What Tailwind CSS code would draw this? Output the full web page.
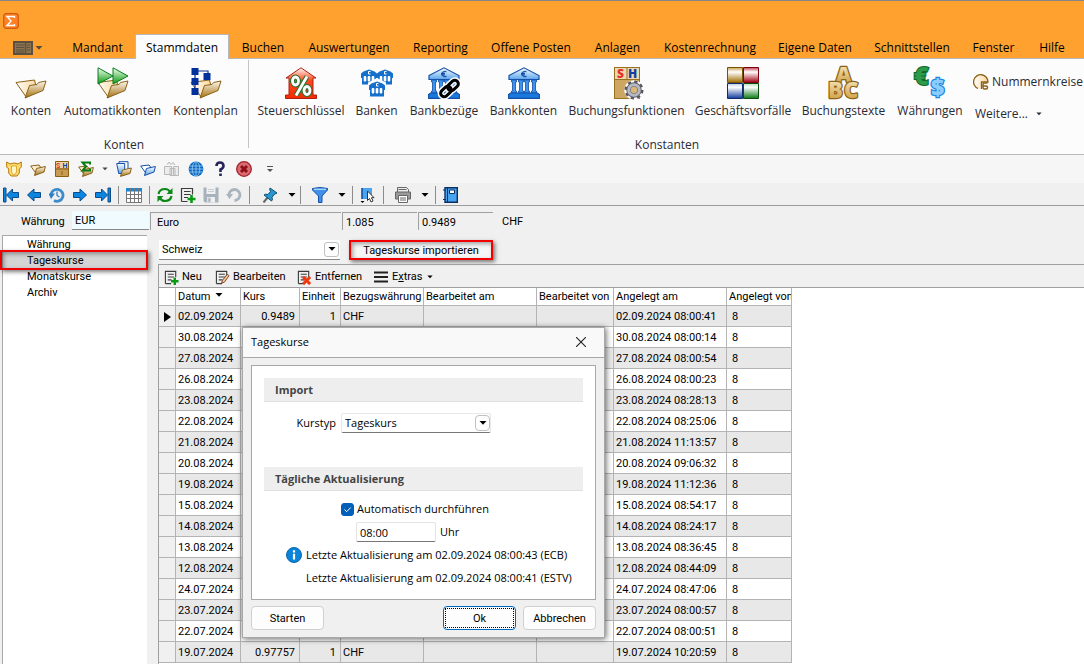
<!DOCTYPE html>
<html lang="de">
<head>
  <meta charset="UTF-8">
  <meta name="viewport" content="width=device-width, initial-scale=1.0">
  <title>Währungen</title>
  <script src="https://cdn.jsdelivr.net/npm/@tailwindcss/browser@4"></script>
</head>
<body class="bg-[#f0f0f0] text-black font-['Roboto','Liberation_Sans',sans-serif] text-[11px] leading-4 h-screen overflow-hidden flex flex-col">

  <!-- shared gradients and symbols -->
  <svg class="absolute w-0 h-0" aria-hidden="true">
    <defs>
      <linearGradient id="gold" x1="0" y1="0" x2="0" y2="1"><stop offset="0" stop-color="#fffaf0"/><stop offset="1" stop-color="#a4700f"/></linearGradient>
      <linearGradient id="cream" x1="0" y1="0" x2="1" y2="0"><stop offset="0" stop-color="#fffdf8"/><stop offset="1" stop-color="#fbd9a0"/></linearGradient>
      <linearGradient id="green" x1="0" y1="0" x2="0" y2="1"><stop offset="0" stop-color="#f4fff4"/><stop offset="1" stop-color="#0a9a0a"/></linearGradient>
      <linearGradient id="red" x1="0" y1="0" x2="0" y2="1"><stop offset="0" stop-color="#fff"/><stop offset=".4" stop-color="#ff4a20"/><stop offset="1" stop-color="#f52a00"/></linearGradient>
      <linearGradient id="blue" x1="0" y1="0" x2="0" y2="1"><stop offset="0" stop-color="#fff"/><stop offset="1" stop-color="#5aa4ec"/></linearGradient>
      <linearGradient id="letters" x1="0" y1="0" x2="0" y2="1"><stop offset="0" stop-color="#fff4d8"/><stop offset="1" stop-color="#c8942c"/></linearGradient>
      <linearGradient id="q1" x1="0" y1="0" x2="0" y2="1"><stop offset="0" stop-color="#c8a050"/><stop offset=".3" stop-color="#fff"/><stop offset="1" stop-color="#a06c00"/></linearGradient>
      <linearGradient id="q2" x1="0" y1="0" x2="0" y2="1"><stop offset="0" stop-color="#c04050"/><stop offset=".3" stop-color="#fff"/><stop offset="1" stop-color="#a00010"/></linearGradient>
      <linearGradient id="q3" x1="0" y1="0" x2="0" y2="1"><stop offset="0" stop-color="#b8c8e8"/><stop offset=".25" stop-color="#fff"/><stop offset="1" stop-color="#103c9c"/></linearGradient>
      <linearGradient id="q4" x1="0" y1="0" x2="0" y2="1"><stop offset="0" stop-color="#b0dcb4"/><stop offset=".25" stop-color="#fff"/><stop offset="1" stop-color="#0a7a14"/></linearGradient>
      <symbol id="folder" viewBox="0 0 32 32">
        <path d="M1 15.500 19.500 13l1 4-9 13.500Z" fill="url(#cream)" stroke="#8a6218"/>
        <path d="M14.500 18.500 22 17.500l1.500-2 7.500-1.500-3 9.500L10 31Z" fill="url(#gold)" stroke="#8a6218"/>
      </symbol>
      <symbol id="folder-small" viewBox="0 0 16 16">
        <path d="M.7 5 9 4l1.500 2-4 7Z" fill="url(#cream)" stroke="#8a6218"/>
        <path d="M6.500 7.500 15.400 5.500 14 11 4.500 14.500Z" fill="url(#gold)" stroke="#8a6218"/>
      </symbol>
      <symbol id="bank" viewBox="0 0 32 32">
        <path d="M1 8.500 16 .8 31 8.500v4H1Z" fill="url(#blue)" stroke="#1550a8" stroke-width="1.200"/>
        <path d="M3.500 13h5v2h-1v9h1v2h-5v-2h1v-9h-1zM10.500 13h5v2h-1v9h1v2h-5v-2h1v-9h-1zM16.500 13h5v2h-1v9h1v2h-5v-2h1v-9h-1zM23.500 13h5v2h-1v9h1v2h-5v-2h1v-9h-1z" fill="#3c94ee" stroke="#1550a8" stroke-width=".8"/>
        <path d="M.6 31.400V27.500l2-1.500h26.800l2 1.500v3.900Z" fill="#1878dc" stroke="#1550a8" stroke-width="1.200"/>
        <path d="M18.500 5a2.600 2.600 0 1 0 0 4M13 6.400h4M13 7.900h4" fill="none" stroke="#1550a8" stroke-width="1.100"/>
      </symbol>
      <symbol id="house" viewBox="0 0 16 16">
        <path d="M0 4.500 2.500 2.500 8 .5l5.500 2L16 4.500V9h-1v6.500H1V9H0Z" fill="#1470cc"/>
        <rect x="2.700" y="7" width="2.600" height="5.500" rx="1" fill="#fff"/><rect x="6.700" y="7" width="2.600" height="5.500" rx="1" fill="#fff"/><rect x="10.700" y="7" width="2.600" height="5.500" rx="1" fill="#fff"/>
        <path d="M9.500 2.500h-2v2.500h2" fill="none" stroke="#fff"/>
      </symbol>
      <symbol id="arrow" viewBox="0 0 16 16"><path d="M1.500 8 8 2v3.500h6.500v5H8V14Z" fill="#0a86e0" stroke="#0d4a8a"/></symbol>
      <symbol id="doc" viewBox="0 0 16 16"><path d="M1.500 14.500v-13h11v6M1.500 14.500h6M4 4.500h6.500M4 7.500h6.500M4 10.500h4" fill="none" stroke="#3c3c3c" stroke-width="1.200"/></symbol>
      <symbol id="down" viewBox="0 0 8 8"><path d="M.5 2h7L4 5.800Z" fill="currentColor"/></symbol>
    </defs>
  </svg>

  <!-- title bar and menu tabs -->
  <header class="bg-[#ffa12e] border-t border-[#858585] border-b border-b-[#b8b8b8] h-[59px] shrink-0 flex flex-col justify-between">
    <svg class="w-4 h-4 ml-[3px] mt-3" viewBox="0 0 16 16"><rect x=".7" y=".7" width="14.600" height="14.600" rx="2.500" fill="#ff8125" stroke="#d25a10" stroke-width="1.200"/><path d="M11.500 5V3.500H4L8 8l-4 4.500h7.500V11" fill="none" stroke="#fff" stroke-width="1.400"/></svg>
    <nav class="flex h-[25px] -mb-px font-['Open_Sans',sans-serif] text-[12px] [&>button]:pt-0.5">
      <button class="w-[60px] shrink-0 flex items-center pl-[13px] gap-[2px] text-[#5a4a38]" aria-label="Ansicht">
        <svg class="w-5 h-[14px]" viewBox="0 0 20 14"><rect x="1" y="1" width="18" height="12" fill="#8b734f" stroke="#5c5042" stroke-width="2"/><path d="M3 4h8M3 6.500h8M3 9h8M14 4h3M14 6.500h3M14 9h3M3 11h8" stroke="#5c5042"/><path d="M12.500 1v12" stroke="#5c5042" stroke-width="1.500"/></svg>
        <svg class="w-2 h-2"><use href="#down"/></svg>
      </button>
      <button class="w-[75px] shrink-0">Mandant</button>
      <button class="w-[94px] shrink-0 bg-[#fcfcfc] border border-b-0 border-[#b8b8b8]">Stammdaten</button>
      <button class="w-[68px] shrink-0">Buchen</button>
      <button class="w-[104px] shrink-0">Auswertungen</button>
      <button class="w-[79px] shrink-0">Reporting</button>
      <button class="w-[102px] shrink-0">Offene Posten</button>
      <button class="w-[71px] shrink-0">Anlagen</button>
      <button class="w-[114px] shrink-0">Kostenrechnung</button>
      <button class="w-[96px] shrink-0">Eigene Daten</button>
      <button class="w-[98px] shrink-0">Schnittstellen</button>
      <button class="w-[65px] shrink-0">Fenster</button>
      <button class="w-[52px] shrink-0">Hilfe</button>
    </nav>
  </header>

  <!-- ribbon -->
  <section class="bg-[#fcfcfc] h-24 shrink-0 border-b border-[#b8b8b8] flex font-['Open_Sans',sans-serif] text-[12px] text-[#2a2a33] whitespace-nowrap">
    <div class="flex flex-col px-1 w-[248px] shrink-0">
      <div class="flex pt-2 h-[68px]">
        <button class="w-[54px] flex flex-col items-center gap-1"><svg class="w-8 h-8"><use href="#folder"/></svg>Konten</button>
        <button class="w-[109px] flex flex-col items-center gap-1">
          <svg class="w-8 h-8" viewBox="0 0 32 32"><use href="#folder"/><path d="M1 .8 16 9 1 17ZM16 .8 31 9 16 17Z" fill="url(#green)" stroke="#0a7a20"/></svg>Automatikkonten</button>
        <button class="w-[77px] flex flex-col items-center gap-1">
          <svg class="w-8 h-8" viewBox="0 0 32 32"><use href="#folder"/><path d="M5 4h13v5M5 4v20" fill="none" stroke="#0a2f8f" stroke-width="1.200"/><path d="M1.500 1h7v7h-7zM1.500 11h7v7h-7zM1.500 21h7v7h-7zM13.500 6h7v7h-7z" fill="#00309c"/></svg>Kontenplan</button>
      </div>
      <div class="text-center mt-2.5">Konten</div>
    </div>
    <div class="w-px bg-[#c4c4c4] mt-px h-[88px] shrink-0"></div>
    <div class="flex flex-col pl-1 flex-1">
      <div class="flex pt-2 h-[68px]">
        <button class="w-[96px] shrink-0 flex flex-col items-center gap-1">
          <svg class="w-8 h-8" viewBox="0 0 32 32"><path d="M1 11 16 .8 31 11h-3v17h3.500v3.500H.5V28H4V11Z" fill="url(#red)" stroke="#b02010"/><g fill="none" stroke="#2a7030" stroke-width="5"><ellipse cx="10.500" cy="14" rx="3" ry="4"/><ellipse cx="22" cy="23.500" rx="3" ry="4"/><path d="M22 9.500 11 28.500"/></g><g fill="none" stroke="#fff" stroke-width="2.800"><ellipse cx="10.500" cy="14" rx="3" ry="4"/><ellipse cx="22" cy="23.500" rx="3" ry="4"/><path d="M22 9.500 11 28.500"/></g></svg>Steuerschlüssel</button>
        <button class="w-[55px] shrink-0 flex flex-col items-center gap-1">
          <svg class="w-8 h-8" viewBox="0 0 32 32"><use href="#house" x="0" y="2" width="16" height="16"/><use href="#house" x="16" y="2" width="16" height="16"/><path d="M7 18v-2.500L16 11l9 4.500V18Z" fill="#fcfcfc"/><use href="#house" x="8" y="14" width="16" height="16"/></svg>Banken</button>
        <button class="w-[80px] shrink-0 flex flex-col items-center gap-1">
          <svg class="w-8 h-8" viewBox="0 0 32 32"><use href="#bank"/><g fill="none" stroke="#fff" stroke-width="6"><rect x="12" y="21" width="12" height="7" rx="3.500" transform="rotate(-42 18 24.500)"/><rect x="19" y="15" width="12" height="7" rx="3.500" transform="rotate(-42 25 18.500)"/></g><g fill="none" stroke="#000" stroke-width="3"><rect x="12" y="21" width="12" height="7" rx="3.500" transform="rotate(-42 18 24.500)"/><rect x="19" y="15" width="12" height="7" rx="3.500" transform="rotate(-42 25 18.500)"/></g></svg>Bankbezüge</button>
        <button class="w-[79px] shrink-0 flex flex-col items-center gap-1"><svg class="w-8 h-8"><use href="#bank"/></svg>Bankkonten</button>
        <button class="w-[127px] shrink-0 flex flex-col items-center gap-1">
          <svg class="w-8 h-8 overflow-visible" viewBox="0 0 32 32"><rect x="3.500" y=".5" width="25" height="31" fill="#cda762" stroke="#9a7020"/><path d="M4 1h24v11H4z" fill="#ecd9b4"/><path d="M16 1v11M4 12.500h24" stroke="#9a7020"/><text x="6" y="10.500" font-family="Open Sans" font-weight="800" font-size="12" fill="#e83020">S</text><text x="17" y="10.500" font-family="Open Sans" font-weight="800" font-size="12" fill="#1040a0">H</text><circle cx="23" cy="23" r="7.800" fill="none" stroke="#fff" stroke-width="4"/><circle cx="23" cy="23" r="8" fill="none" stroke="#55555f" stroke-width="3" stroke-dasharray="3.140"/><circle cx="23" cy="23" r="5.500" fill="#d8b878" stroke="#62626c" stroke-width="4.500"/><circle cx="23" cy="23" r="5.300" fill="none" stroke="#b8b8c4" stroke-width="3"/></svg>Buchungsfunktionen</button>
        <button class="w-[106px] shrink-0 flex flex-col items-center gap-1">
          <svg class="w-8 h-8" viewBox="0 0 32 32"><path d="M.5.5h15v15H.5z" fill="url(#q1)" stroke="#7a5400"/><path d="M16.500.5h15v15h-15z" fill="url(#q2)" stroke="#7c0010"/><path d="M.5 16.500h15v15H.5z" fill="url(#q3)" stroke="#102c70"/><path d="M16.500 16.500h15v15h-15z" fill="url(#q4)" stroke="#0a5010"/></svg>Geschäftsvorfälle</button>
        <button class="w-[95px] shrink-0 flex flex-col items-center gap-1">
          <svg class="w-8 h-8 overflow-visible" viewBox="0 0 32 32" font-family="Open Sans" font-weight="800" fill="url(#letters)" stroke="#8a6218" stroke-width="2.500" stroke-linejoin="round" paint-order="stroke"><text x="8" y="15" font-size="21">A</text><text x="0" y="31" font-size="22">B</text><text x="16" y="31" font-size="22">C</text></svg>Buchungstexte</button>
        <button class="w-[78px] shrink-0 flex flex-col items-center gap-1">
          <svg class="w-8 h-8 overflow-visible" viewBox="0 0 32 32" font-family="Open Sans" font-weight="800"><text x="0" y="17.500" font-size="25" fill="#2c9a48" stroke="#0c6828" stroke-width="2" paint-order="stroke">€</text><text x="17" y="29" font-size="23" fill="#8cccff" stroke="#2088e0" stroke-width="2.500" paint-order="stroke">$</text></svg>Währungen</button>
        <div class="flex flex-col pt-[7px] pl-1 gap-4">
          <button class="flex items-center gap-[3px]">
            <svg class="w-4 h-4" viewBox="0 0 16 16"><path d="M5 14.500A7.200 7.200 0 1 1 15 8H8.500v7" fill="url(#cream)" stroke="#8a6218" stroke-width="1.300"/><path d="M14.500 9h-3a1.500 1.500 0 0 0-1.500 1.500v3q0 1.500 1.500 1.500h1.500q1.500 0 1.500-1.500t-1.500-1.500H10" fill="none" stroke="#8a6218" stroke-width="1.500"/></svg>Nummernkreise</button>
          <button class="flex items-center gap-2 pl-0.5">Weitere... <svg class="w-1.5 h-2" viewBox="0 0 8 8"><use href="#down"/></svg></button>
        </div>
      </div>
      <div class="w-[828px] text-center mt-2.5">Konstanten</div>
    </div>
  </section>

  <!-- quick access bar -->
  <section class="bg-[#f6f6f6] h-7 shrink-0 flex items-center gap-2 pl-1.5">
    <button aria-label="Wappen"><svg class="w-4 h-4" viewBox="0 0 16 16"><path d="M.7 1 4 3l4-1 4 1 3.300-2v5l-2 2v4L11 15H5l-2.300-3V8l-2-2Z" fill="#ffdc70" stroke="#b87800"/><path d="M5.500 5h5v6L9 13.500H7L5.500 11Z" fill="#fff4c8" stroke="#d09010" stroke-width=".7"/></svg></button>
    <button aria-label="Konten"><svg class="w-4 h-4"><use href="#folder-small"/></svg></button>
    <button aria-label="Buchen"><svg class="w-4 h-4 overflow-visible" viewBox="0 0 16 16"><path d="M1.500.5h13v15h-13z" fill="#c89c50" stroke="#8a6010"/><path d="M2 1h12v6H2z" fill="#f0d8a8"/><path d="M1.500 8h13M8 10v4" stroke="#8a6010"/><text x="2" y="6.800" font-size="7" font-weight="700" fill="#e03020">S</text><text x="8.500" y="6.800" font-size="7" font-weight="700" fill="#1040a0">H</text></svg></button>
    <button aria-label="Summen"><svg class="w-4 h-4" viewBox="0 0 16 16"><use href="#folder-small" y="1" width="16" height="16"/><path d="M12 3.500V1.500H4.500L8 5.500 4.500 9.500H12v-2" fill="none" stroke="#0a7a14" stroke-width="2"/></svg></button>
    <svg class="w-1.5 h-2 text-[#444]" viewBox="0 0 8 8"><use href="#down"/></svg>
    <button aria-label="Mappe"><svg class="w-4 h-4" viewBox="0 0 16 16"><path d="M3 .7h9v11H3z" fill="#fff" stroke="#1550a8"/><path d="M.7 2.500h8v10h-6Z" fill="url(#blue)" stroke="#1550a8"/><path d="M6.500 9 15.400 7 14 12.500 4.500 15.400Z" fill="url(#gold)" stroke="#8a6218"/></svg></button>
    <button aria-label="Ordner"><svg class="w-4 h-4" viewBox="0 0 16 16"><path d="M.7 5 9 4l1.500 2-4 7Z" fill="#fff" stroke="#1550a8"/><path d="M6.500 7.500 15.400 5.500 14 11 4.500 14.500Z" fill="url(#blue)" stroke="#1550a8"/></svg></button>
    <button aria-label="Kopieren"><svg class="w-4 h-4" viewBox="0 0 16 16" fill="#ececec" stroke="#b8b8b8"><path d="M3 3.500 5 1l2 2.500 2-2L11 4M.5 5.500h7v8h-7zM6 7.500h5v7H6zM9.500 5.500h5v9h-5z"/></svg></button>
    <button aria-label="Web"><svg class="w-4 h-4" viewBox="0 0 16 16"><circle cx="8" cy="8" r="7.400" fill="#0b67bd"/><path d="M1 5h14M.6 8h14.800M1 11h14M8 .6v14.800" stroke="#9cd0f8" stroke-width=".8"/><ellipse cx="8" cy="8" rx="3.800" ry="7.300" fill="none" stroke="#9cd0f8" stroke-width=".8"/></svg></button>
    <button aria-label="Hilfe"><svg class="w-4 h-4" viewBox="0 0 16 16"><path d="M4.500 5Q4.500 1.500 8 1.500T11.500 5Q11.500 7 8.500 8.500V11M8.500 12.500v2.500" fill="none" stroke="#25255c" stroke-width="2.600"/></svg></button>
    <button aria-label="Schließen"><svg class="w-4 h-4" viewBox="0 0 16 16"><circle cx="8" cy="8" r="7.300" fill="#dc6a70" stroke="#a02028" stroke-width="1.300"/><path d="m5 5 6 6m0-6-6 6" stroke="#8c1018" stroke-width="3"/></svg></button>
    <svg class="w-2 h-2 ml-1.5 text-[#555]" viewBox="0 0 8 8"><path d="M1 1.500h6" stroke="#555"/><path d="M1 4h6L4 7Z" fill="#555"/></svg>
  </section>

  <!-- record toolbar -->
  <section class="h-[23px] pt-px shrink-0 border-b border-[#9c9c9c] flex items-center gap-[7px] pl-[3px]">
    <button aria-label="Erster"><svg class="w-4 h-4" viewBox="0 0 16 16"><path d="M.500 1h2.500v14H.5zM3.500 8 9.500 2v3.500h6v5h-6V14Z" fill="#0a86e0" stroke="#0d4a8a"/></svg></button>
    <button aria-label="Zurück"><svg class="w-4 h-4"><use href="#arrow"/></svg></button>
    <button aria-label="Verlauf"><svg class="w-4 h-4" viewBox="0 0 16 16"><path d="M2 8.500a6 6 0 1 1 3 5" fill="none" stroke="#3a8ccc" stroke-width="2.800"/><path d="M-.5 6.500h6.500L2 12Z" fill="#2d7fc4"/><path d="M8 4.500v4l2.500 1.500" fill="none" stroke="#2d7fc4" stroke-width="1.300"/></svg></button>
    <button aria-label="Weiter"><svg class="w-4 h-4 rotate-180"><use href="#arrow"/></svg></button>
    <button aria-label="Letzter"><svg class="w-4 h-4 rotate-180" viewBox="0 0 16 16"><path d="M.500 1h2.500v14H.5zM3.500 8 9.500 2v3.500h6v5h-6V14Z" fill="#0a86e0" stroke="#0d4a8a"/></svg></button>
    <span class="w-px h-[18px] bg-[#8c8c8c]"></span>
    <button aria-label="Tabelle"><svg class="w-4 h-4" viewBox="0 0 16 16"><path d="M.5 1.500h15v14H.5z" fill="#fff" stroke="#777"/><path d="M0 1h16v3.500H0z" fill="#1688d4"/><path d="M.5 7.500h15M.5 11.500h15M4.500 1v14M8.500 1v14M12.500 1v14" stroke="#777"/></svg></button>
    <span class="w-px h-[18px] bg-[#8c8c8c]"></span>
    <button aria-label="Aktualisieren"><svg class="w-4 h-4" viewBox="0 0 16 16" fill="none" stroke="#0a8a14" stroke-width="2.200"><path d="M1.500 7Q2.500 2 8 2q3.500 0 5 3M14.500 9Q13.500 14 8 14q-3.500 0-5-3"/><path d="M15.500 1v6h-6ZM.5 15V9h6Z" fill="#0a8a14" stroke="none"/></svg></button>
    <button aria-label="Neu"><svg class="w-4 h-4" viewBox="0 0 16 16"><use href="#doc"/><path d="M11.500 8v8M7.500 12h8" stroke="#0a9a14" stroke-width="2.600"/></svg></button>
    <button aria-label="Speichern"><svg class="w-4 h-4" viewBox="0 0 16 16"><path d="M.5.5h15v15H2l-1.500-1.500z" fill="#a8b2bc"/><path d="M3.500 0h9v7h-9zM4 10h8v5.500H4z" fill="#eef0f2"/><path d="M5 11h2.500v4H5zM5 2.500h6M5 4.500h6" fill="#a8b2bc" stroke="#c8ced4"/></svg></button>
    <button aria-label="Rückgängig"><svg class="w-4 h-4" viewBox="0 0 16 16"><path d="M3 8.500A5.500 5.500 0 1 1 8.500 13.500" fill="none" stroke="#aab4be" stroke-width="2.800"/><path d="M0 7h7l-3.500 5Z" fill="#aab4be"/></svg></button>
    <span class="w-px h-[18px] bg-[#8c8c8c]"></span>
    <button class="flex items-center gap-[7px] pl-[3px]" aria-label="Anheften"><svg class="w-5 h-4" viewBox="0 0 20 16"><path d="M8 10 3.500 15.500" stroke="#666" stroke-width="2"/><path d="m10 1 7 5-2 1-1 .5-2 3 .5 2-1 1.500L4 8l1.500-.8 2.500.3 2.500-3-.8-1.800Z" fill="#2a96d0" stroke="#0c5070"/></svg><svg class="w-[10px] h-2" viewBox="0 0 8 8"><use href="#down"/></svg></button>
    <span class="w-px h-[18px] bg-[#8c8c8c] -ml-1"></span>
    <button class="flex items-center gap-[9px] pl-1" aria-label="Filter"><svg class="w-4 h-4" viewBox="0 0 16 16"><path d="M.5 1.500Q8-.5 15.500 1.500v1.500L10 9v6.500H6.500V9L.5 3Z" fill="#4090e8" stroke="#1550a8"/><path d="M2 2.300h12" stroke="#b4dcff" stroke-width="1.200"/></svg><svg class="w-[10px] h-2" viewBox="0 0 8 8"><use href="#down"/></svg></button>
    <span class="w-px h-[18px] bg-[#8c8c8c] -ml-0.5"></span>
    <button aria-label="Auswahl"><svg class="w-4 h-4" viewBox="0 0 16 16"><path d="M2 1h10v11H2z" fill="#48a4f0"/><path d="M2 1v11" stroke="#0c4890" stroke-width="1.500"/><path d="M7.500 4v9.500l2-2 1.500 3.500 2-1-1.500-3.300H14Z" fill="#fff" stroke="#333"/><path d="M.5 14h4l-2 2Z"/></svg></button>
    <span class="w-px h-[18px] bg-[#8c8c8c]"></span>
    <button class="flex items-center gap-[9px] pl-1" aria-label="Drucken"><svg class="w-4 h-4" viewBox="0 0 16 16"><path d="M2.500 5V.5h9l2 2V5" fill="#eee" stroke="#666"/><path d="M3.500 2.500h8" stroke="#666"/><path d="M.5 5h15v7H.5z" fill="#9a9a9a" stroke="#666"/><path d="M3.500 8.500h9v7h-9z" fill="#fff" stroke="#666"/><path d="M5 11h6M5 13h6" stroke="#666"/></svg><svg class="w-[10px] h-2" viewBox="0 0 8 8"><use href="#down"/></svg></button>
    <span class="w-px h-[18px] bg-[#8c8c8c] -ml-0.5"></span>
    <button aria-label="Buch"><svg class="w-4 h-4" viewBox="0 0 16 16"><path d="M2 .7h12.300v14.600H2z" fill="#48a4f0" stroke="#0c3060" stroke-width="1.400"/><path d="M4.500 1v14" stroke="#0c3060"/><path d="M6.500 3h5v3.500h-5z" fill="#fff" stroke="#0c3060"/><path d="M0 3h3M0 12.500h3" stroke="#0c3060"/></svg></button>
  </section>

  <!-- currency header fields -->
  <section class="h-[29px] shrink-0 flex items-start pt-[5px] [&>input]:pt-px">
    <label for="waehrung" class="w-[72px] pl-[21px] pt-[3px] shrink-0">Währung</label>
    <input id="waehrung" value="EUR" class="w-[77px] h-[19px] px-[3px] bg-[#effbff] border-b border-[#888]">
    <input aria-label="Bezeichnung" value="Euro" class="w-[191px] h-[18px] mt-px ml-px pl-1.5 border-t border-l border-[#a0a0a0]">
    <input aria-label="Kurs" value="1.085" class="w-[75px] h-[18px] mt-px ml-px pl-[3px] border-t border-l border-[#a0a0a0]">
    <input aria-label="Kurs invers" value="0.9489" class="w-[75px] h-[18px] mt-px ml-px pl-[3px] border-t border-l border-[#a0a0a0]">
    <span class="pl-[9px] pt-[3px]">CHF</span>
  </section>

  <main class="flex flex-1 min-h-0">
    <!-- page list -->
    <nav class="w-[145px] ml-0.5 shrink-0 bg-white border-t border-l border-[#a8a8a8] leading-[18px]">
      <a href="#" class="block h-4 pl-6">Währung</a>
      <a href="#" class="block h-4 pl-6 relative bg-[#d4d4d4]">Tageskurse<span class="absolute -left-[3px] -right-px -top-0.5 -bottom-0.5 border-2 border-[#f00000] shadow-[2px_2px_4px_rgba(0,0,0,0.5),inset_2px_2px_4px_rgba(0,0,0,0.35)]"></span></a>
      <a href="#" class="block h-4 pl-6">Monatskurse</a>
      <a href="#" class="block h-4 pl-6">Archiv</a>
    </nav>

    <div class="flex-1 min-w-0 ml-[11px] flex flex-col pt-1">
      <div class="flex items-center h-[21px] mb-1 pl-px shrink-0">
        <div class="relative w-[181px]">
          <select aria-label="Land" class="appearance-none w-full h-5 pl-[3px] pt-0.5 bg-white border-b border-[#888]"><option>Schweiz</option></select>
          <span class="absolute right-px top-0.5 w-[15px] h-[15px] rounded-[3px] border border-[#c0c0c0] bg-white flex items-center justify-center pointer-events-none"><svg class="w-2 h-2"><use href="#down"/></svg></span>
        </div>
        <button class="ml-[9px] w-[144px] h-5 bg-[#f6f6f6] border-2 border-[#f00000] pt-px leading-4 shadow-[2px_2px_4px_rgba(0,0,0,0.5),inset_2px_2px_4px_rgba(0,0,0,0.35)]">Tageskurse importieren</button>
      </div>

      <div class="border-t border-l border-[#a0a0a0] flex-1 min-h-0 flex flex-col">
        <div class="h-[22px] pt-0.5 shrink-0 flex items-center pl-[5px]">
          <button class="w-[51px] flex items-center gap-[3px]"><svg class="w-[15px] h-[15px]" viewBox="0 0 16 16"><use href="#doc"/><path d="M11.500 8v8M7.500 12h8" stroke="#0a9a14" stroke-width="2.600"/></svg>Neu</button>
          <button class="w-[82px] flex items-center gap-[3px]"><svg class="w-[15px] h-[15px]" viewBox="0 0 16 16"><use href="#doc"/><path d="m7 14 1-3 5-6.500 2 1.500-5 7Z" fill="#f0c890" stroke="#7c4030"/></svg>Bearbeiten</button>
          <button class="w-[77px] flex items-center gap-[3px]"><svg class="w-[15px] h-[15px]" viewBox="0 0 16 16"><use href="#doc"/><path d="m6.500 7.500 7.500 7.500m0-7.500-7.500 7.500" stroke="#ee3a10" stroke-width="3.200"/></svg>Entfernen</button>
          <button class="flex items-center gap-1"><svg class="w-[14px] h-3" viewBox="0 0 14 12"><path d="M0 1.500h14M0 6h14M0 10.500h14" stroke="#222" stroke-width="2"/></svg><span>E<u>x</u>tras</span><svg class="w-1.5 h-1.5" viewBox="0 0 8 8"><use href="#down"/></svg></button>
        </div>

        <div class="bg-white border-t border-[#a0a0a0] flex-1 min-h-0 overflow-hidden">
          <table class="table-fixed w-[633px] border-separate border-spacing-0">
            <colgroup>
              <col class="w-[17px]"><col class="w-[65px]"><col class="w-[59px]"><col class="w-[41px]"><col class="w-[83px]"><col class="w-[113px]"><col class="w-[77px]"><col class="w-[113px]"><col class="w-[65px]">
            </colgroup>
            <thead>
              <tr class="h-[18px] text-left whitespace-nowrap [&>th]:font-normal [&>th]:border-r [&>th]:border-b [&>th]:border-[#b4b4b4] [&>th]:pt-px [&>th]:pb-0 [&>th]:px-0.5 [&>th]:overflow-hidden">
                <th></th>
                <th>Datum <svg class="inline w-2 h-2 ml-0.5 mb-1"><use href="#down"/></svg></th>
                <th>Kurs</th><th>Einheit</th><th>Bezugswährung</th><th>Bearbeitet am</th><th>Bearbeitet von</th><th>Angelegt am</th><th>Angelegt von</th>
              </tr>
            </thead>
            <tbody id="kurse"></tbody>
          </table>
        </div>
      </div>
    </div>
  </main>

  <!-- import dialog -->
  <div role="dialog" aria-labelledby="dlg" class="absolute left-[242px] top-[327px] w-[363px] bg-[#f0f0f0] border border-[#a8a8a8] shadow-[1px_1px_6px_rgba(0,0,0,0.6)] flex flex-col">
    <div class="h-[30px] pb-0.5 bg-[#f9f9f9] border-b border-[#a8a8a8] flex items-center justify-between pl-2 pr-[18px]">
      <h2 id="dlg" class="font-['Open_Sans',sans-serif] text-[11px]">Tageskurse</h2>
      <button aria-label="Dialog schließen"><svg class="w-[10px] h-[10px]" viewBox="0 0 10 10"><path d="m0 0 10 10M10 0 0 10" stroke="#222" stroke-width="1.100"/></svg></button>
    </div>
    <div class="mx-2 mt-[7px] bg-white border border-[#a8a8a8] px-3 pt-3 h-[235px] font-['Open_Sans',sans-serif] text-[11px]">
      <h3 class="h-6 leading-6 pl-[11px] bg-[#eee] border-b border-[#e0e0e0] font-bold text-[#444]">Import</h3>
      <div class="flex items-center mt-[11px]">
        <label for="kurstyp" class="w-[77px] pr-[5px] text-right">Kurstyp</label>
        <div class="relative w-[150px]">
          <select id="kurstyp" class="appearance-none w-full h-5 pl-[3px] bg-white border border-[#e8e8e8] border-b-[#777] rounded-[2px]"><option>Tageskurs</option></select>
          <span class="absolute right-px top-0.5 w-[15px] h-4 rounded-[4px] border border-[#c0c0c0] bg-white flex items-center justify-center pointer-events-none"><svg class="w-2 h-2"><use href="#down"/></svg></span>
        </div>
      </div>
      <h3 class="mt-[34px] h-6 leading-6 pl-[11px] bg-[#eee] border-b border-[#e0e0e0] font-bold text-[#444]">Tägliche Aktualisierung</h3>
      <div class="flex items-center gap-[3px] mt-[10px] pl-[77px]">
        <span class="relative flex"><input id="auto" type="checkbox" checked class="peer appearance-none w-[13px] h-[13px] rounded-[3px] border border-[#005fb8] checked:bg-[#005fb8]"><svg class="absolute inset-0 w-[13px] h-[13px] pointer-events-none hidden peer-checked:block" viewBox="0 0 13 13"><path d="m3.500 6.500 2.200 2.200 4-4.200" fill="none" stroke="#fff"/></svg></span>
        <label for="auto">Automatisch durchführen</label>
      </div>
      <div class="flex items-center gap-1 mt-[5px] pl-[92px]">
        <input id="zeit" value="08:00" class="w-20 h-5 pl-[3px] bg-white border border-[#e4e4e4] border-b-[#777] rounded-[2px]">
        <label for="zeit">Uhr</label>
      </div>
      <div class="flex items-start gap-1 mt-[5px] pl-[22px] whitespace-nowrap">
        <svg class="w-4 h-4" viewBox="0 0 16 16"><circle cx="8" cy="8" r="7.500" fill="#0a84d8" stroke="#0868b0"/><path d="M8 3.200v2.200M8 6.800V12.500" stroke="#fff" stroke-width="2.200"/></svg>
        <div class="flex flex-col gap-[7px]">
          <p>Letzte Aktualisierung am 02.09.2024 08:00:43 (ECB)</p>
          <p>Letzte Aktualisierung am 02.09.2024 08:00:41 (ESTV)</p>
        </div>
      </div>
    </div>
    <div class="flex gap-[7px] px-2 pt-1.5 pb-[7px]">
      <button class="w-[73px] h-6 mr-auto bg-[#fdfdfd] border border-[#d0d0d0] rounded-[4px] pt-px">Starten</button>
      <button class="w-[73px] h-6 bg-[#fdfdfd] border border-[#0067c0] rounded-[4px] p-px"><span class="block h-full border border-dotted border-black leading-5">Ok</span></button>
      <button class="w-[73px] h-6 bg-[#fdfdfd] border border-[#d0d0d0] rounded-[4px] pt-0.5">Abbrechen</button>
    </div>
  </div>

  <script>
    const kurse = [
      ['02.09.2024', '0.9489', '08:00:41'],
      ['30.08.2024', '', '08:00:14'],
      ['27.08.2024', '', '08:00:54'],
      ['26.08.2024', '', '08:00:23'],
      ['23.08.2024', '', '08:28:13'],
      ['22.08.2024', '', '08:25:06'],
      ['21.08.2024', '', '11:13:57'],
      ['20.08.2024', '', '09:06:32'],
      ['19.08.2024', '', '11:12:36'],
      ['15.08.2024', '', '08:54:17'],
      ['14.08.2024', '', '08:24:17'],
      ['13.08.2024', '', '08:36:45'],
      ['12.08.2024', '', '08:44:09'],
      ['24.07.2024', '', '08:47:06'],
      ['23.07.2024', '', '08:00:57'],
      ['22.07.2024', '', '08:00:51'],
      ['19.07.2024', '0.97757', '10:20:59']
    ];

    document.getElementById('kurse').innerHTML = kurse.map(([datum, kurs, zeit], i) => `
      <tr class="h-[21px] odd:bg-[#e8e8e8] bg-white whitespace-nowrap [&>td]:border-r [&>td]:border-b [&>td]:border-[#b4b4b4] [&>td]:pt-px [&>td]:pb-0 [&>td]:px-0.5">
        <td class="bg-[#f0f0f0]">${i === 0 ? '<svg class="w-[7px] h-[10px] ml-[3px]" viewBox="0 0 7 10"><path d="M0 0 7 5 0 10Z"/></svg>' : ''}</td>
        <td>${datum}</td>
        <td class="text-right"><span class="pr-0.5">${kurs}</span></td>
        <td class="text-right"><span class="pr-0.5">${kurs ? 1 : ''}</span></td>
        <td>${kurs ? 'CHF' : ''}</td>
        <td></td>
        <td></td>
        <td>${datum} ${zeit}</td>
        <td><span class="pl-[3px]">8</span></td>
      </tr>`).join('');
  </script>
</body>
</html>
